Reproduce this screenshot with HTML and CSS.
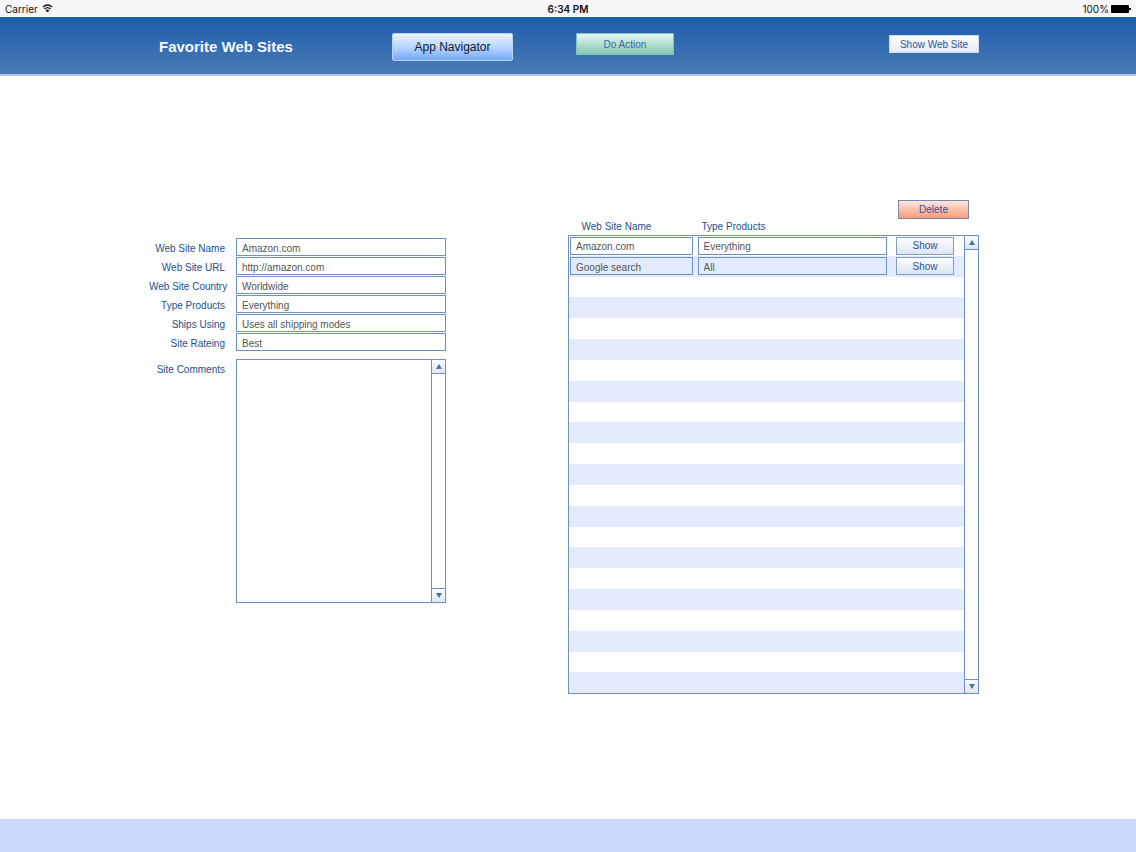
FILE: index.html
```html
<!DOCTYPE html>
<html lang="en">
<head>
  <meta charset="UTF-8">
  <title>Favorite Web Sites</title>
  <link rel="stylesheet" href="styles.css">
</head>
<body>
  <div class="status-bar">
    <div class="status-left">
      <span>Carrier</span>
      <svg class="wifi" viewBox="0 0 20 16" aria-hidden="true">
        <path d="M1.5 5.5 Q10 -2 18.5 5.5" />
        <path d="M4.5 8.8 Q10 4 15.5 8.8" />
        <path class="wifi-dot" d="M6.5 11.5 Q10 8.5 13.5 11.5 L10 15 Z" />
      </svg>
    </div>
    <div class="clock">6:34 PM</div>
    <div class="status-right">
      <span>100%</span>
      <svg class="battery" viewBox="0 0 20 8" aria-hidden="true">
        <rect x="0" y="0" width="18" height="8" rx="1" />
        <rect x="18" y="3" width="2" height="2" />
      </svg>
    </div>
  </div>

  <header class="header">
    <h1>Favorite Web Sites</h1>
    <button type="button" class="btn-navigator">App Navigator</button>
    <button type="button" class="btn-action">Do Action</button>
    <button type="button" class="btn-site">Show Web Site</button>
  </header>

  <main class="main">
    <form class="site-form">
      <label for="name">Web Site Name</label>
      <input type="text" id="name" value="Amazon.com">
      <label for="url">Web Site URL</label>
      <input type="text" id="url" value="http://amazon.com">
      <label for="country">Web Site Country</label>
      <input type="text" id="country" value="Worldwide">
      <label for="products">Type Products</label>
      <input type="text" id="products" value="Everything">
      <label for="ships">Ships Using</label>
      <input type="text" id="ships" value="Uses all shipping modes">
      <label for="rating">Site Rateing</label>
      <input type="text" id="rating" value="Best">
      <label for="comments" class="comments-label">Site Comments</label>
      <div class="comments">
        <textarea id="comments"></textarea>
        <div class="scrollbar">
          <button type="button" class="scroll-up" aria-label="Scroll up"><svg viewBox="0 0 6 5"><path d="M3 0 L6 5 H0 Z" /></svg></button>
          <button type="button" class="scroll-down" aria-label="Scroll down"><svg viewBox="0 0 6 5"><path d="M0 0 H6 L3 5 Z" /></svg></button>
        </div>
      </div>
    </form>

    <section class="sites">
      <button type="button" class="btn-delete">Delete</button>
      <div class="portal">
        <table>
          <thead>
            <tr>
              <th class="col-name">Web Site Name</th>
              <th class="col-type">Type Products</th>
              <th class="col-show"></th>
            </tr>
          </thead>
          <tbody>
            <tr>
              <td class="col-name"><input type="text" value="Amazon.com" aria-label="Web Site Name"></td>
              <td class="col-type"><input type="text" value="Everything" aria-label="Type Products"></td>
              <td class="col-show"><button type="button" class="btn-show">Show</button></td>
            </tr>
            <tr>
              <td class="col-name"><input type="text" value="Google search" aria-label="Web Site Name"></td>
              <td class="col-type"><input type="text" value="All" aria-label="Type Products"></td>
              <td class="col-show"><button type="button" class="btn-show">Show</button></td>
            </tr>
            <tr><td colspan="3"></td></tr>
            <tr><td colspan="3"></td></tr>
            <tr><td colspan="3"></td></tr>
            <tr><td colspan="3"></td></tr>
            <tr><td colspan="3"></td></tr>
            <tr><td colspan="3"></td></tr>
            <tr><td colspan="3"></td></tr>
            <tr><td colspan="3"></td></tr>
            <tr><td colspan="3"></td></tr>
            <tr><td colspan="3"></td></tr>
            <tr><td colspan="3"></td></tr>
            <tr><td colspan="3"></td></tr>
            <tr><td colspan="3"></td></tr>
            <tr><td colspan="3"></td></tr>
            <tr><td colspan="3"></td></tr>
            <tr><td colspan="3"></td></tr>
            <tr><td colspan="3"></td></tr>
            <tr><td colspan="3"></td></tr>
            <tr><td colspan="3"></td></tr>
            <tr><td colspan="3"></td></tr>
          </tbody>
        </table>
        <div class="scrollbar">
          <button type="button" class="scroll-up" aria-label="Scroll up"><svg viewBox="0 0 6 5"><path d="M3 0 L6 5 H0 Z" /></svg></button>
          <button type="button" class="scroll-down" aria-label="Scroll down"><svg viewBox="0 0 6 5"><path d="M0 0 H6 L3 5 Z" /></svg></button>
        </div>
      </div>
    </section>
  </main>

  <footer class="footer"></footer>
</body>
</html>
```
FILE: styles.css
```css
* {
  box-sizing: border-box;
}

body {
  margin: 0;
  min-height: 100vh;
  display: flex;
  flex-direction: column;
  background-color: #fefefe;
  color: #24508c;
  font-family: "Liberation Sans", Arial, sans-serif;
  font-size: 10px;
}

button, input, textarea {
  margin: 0;
  padding: 0;
  font-family: inherit;
  font-size: 10px;
  border-radius: 0;
}

button {
  color: #2c5594;
  cursor: pointer;
}

/* Status bar */
.status-bar {
  display: grid;
  grid-template-columns: 1fr auto 1fr;
  align-items: center;
  height: 17px;
  padding: 0 5px;
  background-color: #f7f6f8;
  color: #111;
  font-family: Inter, Roboto, sans-serif;
}

.status-left, .status-right {
  display: flex;
  align-items: center;
  gap: 4px;
}

.status-right {
  justify-content: flex-end;
  gap: 2px;
}

.clock {
  font-weight: 600;
}

.wifi {
  width: 11px;
  height: 9px;
  fill: none;
  stroke: #111;
  stroke-width: 2.4;
}

.wifi .wifi-dot {
  fill: #111;
  stroke: none;
}

.battery {
  width: 20px;
  height: 8px;
  fill: #000;
}

/* Blue header */
.header {
  display: flex;
  align-items: flex-start;
  height: 59px;
  padding: 16px 157px 0 159px;
  background: linear-gradient(#1c5eac, #4a7ab6);
  border-bottom: 2px solid #b3c3e2;
}

.header h1 {
  width: 233px;
  margin: 0;
  color: #f4f9ff;
  font-size: 15px;
  line-height: 27px;
}

.btn-navigator {
  width: 121px;
  height: 28px;
  border: 1px solid #b9d4fb;
  border-radius: 2px;
  background: linear-gradient(#eaf3ff, #b9d5ff 50%, #76a8fa);
  color: #0c1a33;
  font-size: 12px;
}

.btn-action {
  width: 98px;
  height: 22px;
  margin-left: 63px;
  border: 1px solid #86bfc4;
  background: linear-gradient(#e6f6f2, #b4dfd3 50%, #84c7b4);
  color: #2e6ba3;
}

.btn-site {
  width: 90px;
  height: 18px;
  margin: 2px 0 0 auto;
  border: 1px solid #c9dbef;
  background: linear-gradient(#fff, #e3ebf4);
}

/* Form and list */
.main {
  flex: 1;
  display: grid;
  grid-template-columns: 297fr 411fr;
  align-items: start;
  gap: 122px;
  padding: 124px 157px 40px 149px;
}

input {
  display: block;
  width: 100%;
  height: 18px;
  padding: 2px 5px 0;
  border: 1px solid #6d90be;
  background-color: #fff;
  color: #555;
}

.site-form {
  display: grid;
  grid-template-columns: 76px 1fr;
  gap: 1px 11px;
  padding-top: 38px;
}

.site-form label {
  line-height: 21px;
  height: 18px;
  text-align: right;
  white-space: nowrap;
}

.site-form .comments-label, .comments {
  margin-top: 7px;
}

.comments {
  display: flex;
  height: 244px;
}

.comments textarea {
  flex: 1;
  min-width: 0;
  padding: 4px 6px;
  border: 1px solid #6d90be;
  border-right: none;
  background-color: #fff;
  color: #555;
  resize: none;
}

.scrollbar {
  display: flex;
  flex-direction: column;
  justify-content: space-between;
  width: 15px;
  border: 1px solid #6d90be;
  background-color: #fff;
}

.scrollbar button {
  display: flex;
  align-items: center;
  justify-content: center;
  height: 14px;
  border: none;
  background: linear-gradient(#fafcff, #dfe6f1);
}

.scrollbar .scroll-up {
  border-bottom: 1px solid #6d90be;
}

.scrollbar .scroll-down {
  border-top: 1px solid #6d90be;
}

.scrollbar svg {
  width: 6px;
  height: 5px;
  fill: #4a74a8;
}

.sites {
  display: flex;
  flex-direction: column;
}

.btn-delete {
  align-self: flex-end;
  width: 71px;
  height: 19px;
  margin-right: 10px;
  border: 1px solid #7b86a6;
  background: linear-gradient(#fde9e3, #fbbfa9 50%, #f99c7e);
}

.portal {
  display: flex;
}

.portal table {
  flex: 1;
  height: 475px;
  border-collapse: collapse;
  table-layout: fixed;
}

.portal .scrollbar {
  margin-top: 16px;
}

.portal th {
  height: 16px;
  padding: 0;
  font-weight: normal;
  text-align: left;
}

.portal tbody {
  border: 1px solid #6d90be;
  border-right: none;
}

.portal td {
  height: 20px;
  padding: 0;
}

.portal tbody tr:nth-child(even) {
  background-color: #e4eafb;
}

.portal tbody tr:nth-child(even) input {
  background-color: #e2ebfb;
}

.col-name {
  width: 127px;
}

.portal th.col-name {
  padding-left: 13px;
}

.portal th.col-type {
  padding-left: 6px;
}

.portal td.col-name {
  padding: 0 3px 0 1px;
}

.portal td.col-type {
  padding: 0 2px;
}

.col-show {
  width: 75px;
}

.portal td.col-show {
  padding: 0 10px 0 7px;
}

.btn-show {
  display: block;
  width: 100%;
  height: 18px;
  border: 1px solid #7f9cc4;
  background: linear-gradient(#fbfcff, #dde5f2);
}

/* Bottom strip */
.footer {
  height: 33px;
  background-color: #cbdbfd;
}
```
